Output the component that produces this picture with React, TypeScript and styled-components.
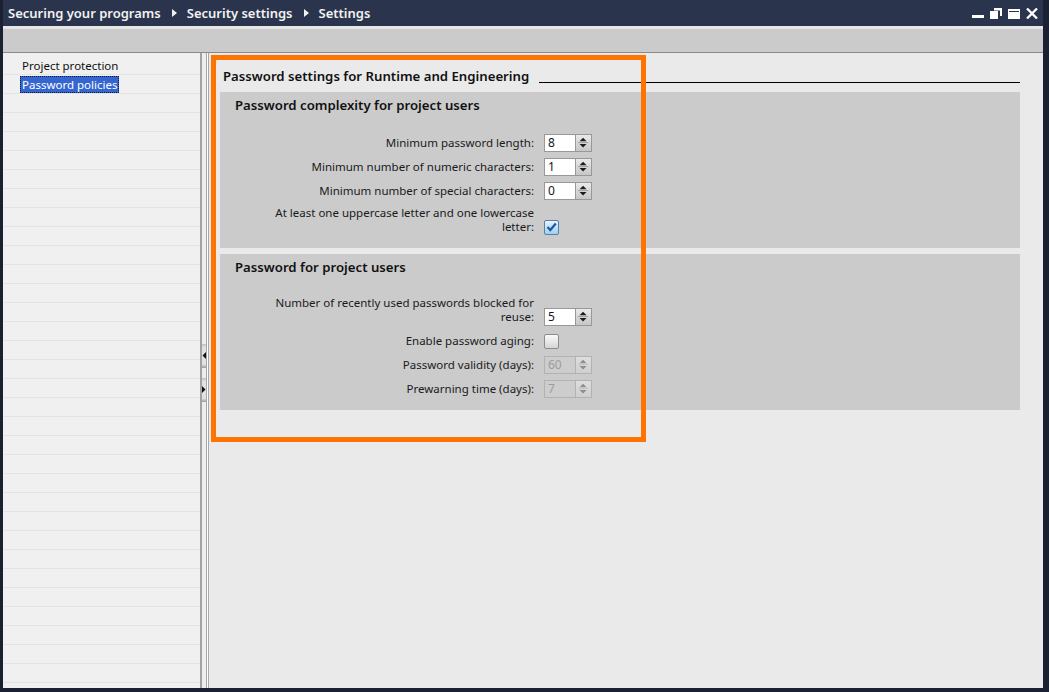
import React from 'react'
import styled, { createGlobalStyle } from 'styled-components'

const GlobalStyle = createGlobalStyle`
  html, body {
    margin: 0;
    padding: 0;
    background: #1b2133;
  }
  body {
    font-family: "Noto Sans", "Liberation Sans", sans-serif;
  }
`

const complexity = [
    { label: 'Minimum password length:', value: '8' },
    { label: 'Minimum number of numeric characters:', value: '1' },
    { label: 'Minimum number of special characters:', value: '0' },
]

const Frame = styled.div`
width: 1049px;
height: 692px;
box-sizing: border-box;
padding: 0 6px 4px 3px;
background: #1b2133;
display: flex;
`

const Window = styled.div`
flex: 1;
display: flex;
flex-direction: column;
overflow: hidden;
`

const TitleBar = styled.div`
height: 26px;
flex-shrink: 0;
background: #2b344d;
color: #f2f2f2;
display: flex;
align-items: center;
padding: 0 5px 0 5px;
font-size: 13px;
font-weight: 600;
`

const Crumb = styled.span`
white-space: nowrap;
`

const Sep = styled.svg`
width: 5px;
height: 8px;
margin: 0 10px 0 11px;
`

const WinButtons = styled.div`
margin-left: auto;
display: flex;
align-items: center;
gap: 6px;
`

const TopStrip = styled.div`
height: 3px;
flex-shrink: 0;
background: #e6e6e6;
`

const Toolbar = styled.div`
height: 23px;
flex-shrink: 0;
background: #cbcbcb;
border-bottom: 1px solid #8a8a8a;
`

const Body = styled.div`
flex: 1;
display: flex;
min-height: 0;
`

const Nav = styled.div`
width: 197px;
flex-shrink: 0;
background: #f0f0f0;
padding-top: 3px;
overflow: hidden;
`

const NavRow = styled.div`
height: 18px;
border-bottom: 1px solid #e4e4e4;
padding-left: 17px;
display: flex;
align-items: center;
font-size: 11.5px;
color: #111;
`

const NavItem = styled.span<{ $selected?: boolean }>`
padding: 0 1px;
line-height: 15px;
border: 1px dotted ${p => (p.$selected ? '#0b1a3a' : 'transparent')};
background: ${p => (p.$selected ? '#3566d0' : 'transparent')};
color: ${p => (p.$selected ? '#ffffff' : '#111')};
`

const Splitter = styled.div`
width: 9px;
flex-shrink: 0;
box-sizing: border-box;
border-left: 2px solid #a2a2a2;
border-right: 1px solid #a8a8a8;
background: linear-gradient(to right, #ededed 0 4px, #a8a8a8 4px 5px, #ffffff 5px 6px);
display: flex;
flex-direction: column;
justify-content: center;
gap: 10px;
padding-top: 4px;
`

const SplitButton = styled.div`
width: 4px;
height: 24px;
background: linear-gradient(#c2c2c2, #e2e2e2 15%, #e2e2e2 85%, #9a9a9a);
display: flex;
align-items: center;
justify-content: center;
`

const Main = styled.div`
flex: 1;
position: relative;
background: #eaeaea;
padding: 13px 23px 0 11px;
`

const Highlight = styled.div`
position: absolute;
left: 2px;
top: 2px;
width: 435px;
height: 387px;
box-sizing: border-box;
border: 5px solid #ff7300;
pointer-events: none;
`

const SectionHeader = styled.div`
display: flex;
align-items: center;
height: 20px;
padding-left: 3px;
margin-bottom: 6px;
`

const SectionTitle = styled.span`
font-size: 13.2px;
font-weight: 600;
color: #111;
white-space: nowrap;
`

const SectionLine = styled.div`
flex: 1;
height: 1px;
background: #000;
margin: 12px 0 0 10px;
`

const Panel = styled.div`
background: #cbcbcb;
padding: 4px 0 12px;
margin-bottom: 6px;
`

const PanelTitle = styled.div`
padding-left: 15px;
font-size: 13.2px;
font-weight: 600;
line-height: 18px;
color: #111;
margin-bottom: 20px;
`

const Form = styled.div`
display: grid;
grid-template-columns: 268px max-content;
column-gap: 10px;
row-gap: 6px;
padding-left: 46px;
`

const Label = styled.div<{ $wrap?: boolean }>`
text-align: right;
font-size: 11.5px;
line-height: 14px;
color: #1a1a1a;
align-self: center;
padding-bottom: ${p => (p.$wrap ? '2px' : '0')};
`

const Control = styled.div<{ $wrap?: boolean }>`
align-self: ${p => (p.$wrap ? 'end' : 'center')};
display: flex;
height: 18px;
align-items: center;
`

const Spin = styled.div`
display: flex;
height: 18px;
`

const Field = styled.div<{ $disabled?: boolean }>`
width: 31px;
box-sizing: border-box;
border: 1px solid ${p => (p.$disabled ? '#b2b2b2' : '#989898')};
border-right: none;
background: ${p => (p.$disabled ? '#cdcdcd' : '#ffffff')};
color: ${p => (p.$disabled ? '#9c9c9c' : '#101828')};
font-size: 12px;
line-height: 16px;
padding-left: 3px;
`

const SpinButtons = styled.svg<{ $disabled?: boolean }>`
width: 17px;
height: 18px;
box-sizing: border-box;
border: 1px solid ${p => (p.$disabled ? '#b2b2b2' : '#989898')};
background: ${p => (p.$disabled ? 'linear-gradient(#dedede, #cfcfcf)' : 'linear-gradient(#e9e9e9, #c6c6c6)')};
`

const CheckBox = styled.div<{ $checked?: boolean }>`
width: 15px;
height: 15px;
box-sizing: border-box;
border-radius: 2px;
border: 1px solid ${p => (p.$checked ? '#5a7ea6' : '#8c8c8c')};
background: ${p => (p.$checked ? 'linear-gradient(#e4f4ff, #9fd0ef)' : 'linear-gradient(#fafafa, #d6d6d6)')};
display: flex;
align-items: center;
justify-content: center;
`

const Spinner = ({ value, disabled }: { value: string; disabled?: boolean }) => (
    <Spin>
        <Field $disabled={disabled}>{value}</Field>
        <SpinButtons $disabled={disabled} viewBox="0 0 17 18">
            <polygon points="4,7 12,7 8,3" fill={disabled ? '#8e8e8e' : '#1c1c1c'} />
            <line x1="2" y1="8.5" x2="14" y2="8.5" stroke={disabled ? '#c0c0c0' : '#9a9a9a'} strokeWidth="1" />
            <polygon points="4,10 12,10 8,14" fill={disabled ? '#8e8e8e' : '#1c1c1c'} />
        </SpinButtons>
    </Spin>
)

const Check = ({ checked }: { checked?: boolean }) => (
    <CheckBox $checked={checked}>
        {checked && (
            <svg width="11" height="10" viewBox="0 0 11 10">
                <path d="M1.5 5 L4.3 8 L9.8 1.5" fill="none" stroke="#1d55a8" strokeWidth="2.2" />
            </svg>
        )}
    </CheckBox>
)

const Arrow = () => (
    <Sep viewBox="0 0 5 8">
        <polygon points="0,0 5,4 0,8" fill="#f2f2f2" />
    </Sep>
)

const App = () => {
    const navRows = Array.from({ length: 34 }, (_, i) => i)
    return (
        <Frame>
            <GlobalStyle />
            <Window>
                <TitleBar>
                    <Crumb>Securing your programs</Crumb>
                    <Arrow />
                    <Crumb>Security settings</Crumb>
                    <Arrow />
                    <Crumb>Settings</Crumb>
                    <WinButtons>
                        <svg width="12" height="11" viewBox="0 0 12 11">
                            <rect x="0" y="7" width="12" height="3" fill="#fff" />
                        </svg>
                        <svg width="12" height="11" viewBox="0 0 12 11">
                            <path d="M4 0 H12 V8 H10 V2.5 H4 Z" fill="#fff" />
                            <rect x="0" y="3" width="8" height="8" fill="#fff" />
                        </svg>
                        <svg width="12" height="11" viewBox="0 0 12 11">
                            <rect x="0" y="1" width="12" height="10" fill="#fff" />
                            <rect x="1" y="3" width="10" height="1" fill="#2b344d" />
                        </svg>
                        <svg width="12" height="11" viewBox="0 0 12 11">
                            <path d="M1 0.5 L11 10.5 M11 0.5 L1 10.5" stroke="#fff" strokeWidth="2.3" />
                        </svg>
                    </WinButtons>
                </TitleBar>
                <TopStrip />
                <Toolbar />
                <Body>
                    <Nav>
                        {navRows.map(i => (
                            <NavRow key={i}>
                                {i === 0 && <NavItem>Project protection</NavItem>}
                                {i === 1 && <NavItem $selected>Password policies</NavItem>}
                            </NavRow>
                        ))}
                    </Nav>
                    <Splitter>
                        <SplitButton>
                            <svg width="4" height="7" viewBox="0 0 4 7">
                                <polygon points="4,0 0.5,3.5 4,7" fill="#111" />
                            </svg>
                        </SplitButton>
                        <SplitButton>
                            <svg width="4" height="7" viewBox="0 0 4 7">
                                <polygon points="0,0 3.5,3.5 0,7" fill="#111" />
                            </svg>
                        </SplitButton>
                    </Splitter>
                    <Main>
                        <SectionHeader>
                            <SectionTitle>Password settings for Runtime and Engineering</SectionTitle>
                            <SectionLine />
                        </SectionHeader>
                        <Panel>
                            <PanelTitle>Password complexity for project users</PanelTitle>
                            <Form>
                                {complexity.map(c => (
                                    <React.Fragment key={c.label}>
                                        <Label>{c.label}</Label>
                                        <Control><Spinner value={c.value} /></Control>
                                    </React.Fragment>
                                ))}
                                <Label $wrap>At least one uppercase letter and one lowercase<br />letter:</Label>
                                <Control $wrap><Check checked /></Control>
                            </Form>
                        </Panel>
                        <Panel>
                            <PanelTitle>Password for project users</PanelTitle>
                            <Form>
                                <Label $wrap>Number of recently used passwords blocked for<br />reuse:</Label>
                                <Control $wrap><Spinner value="5" /></Control>
                                <Label>Enable password aging:</Label>
                                <Control><Check /></Control>
                                <Label>Password validity (days):</Label>
                                <Control><Spinner value="60" disabled /></Control>
                                <Label>Prewarning time (days):</Label>
                                <Control><Spinner value="7" disabled /></Control>
                            </Form>
                        </Panel>
                        <Highlight />
                    </Main>
                </Body>
            </Window>
        </Frame>
    )
}

export default App
